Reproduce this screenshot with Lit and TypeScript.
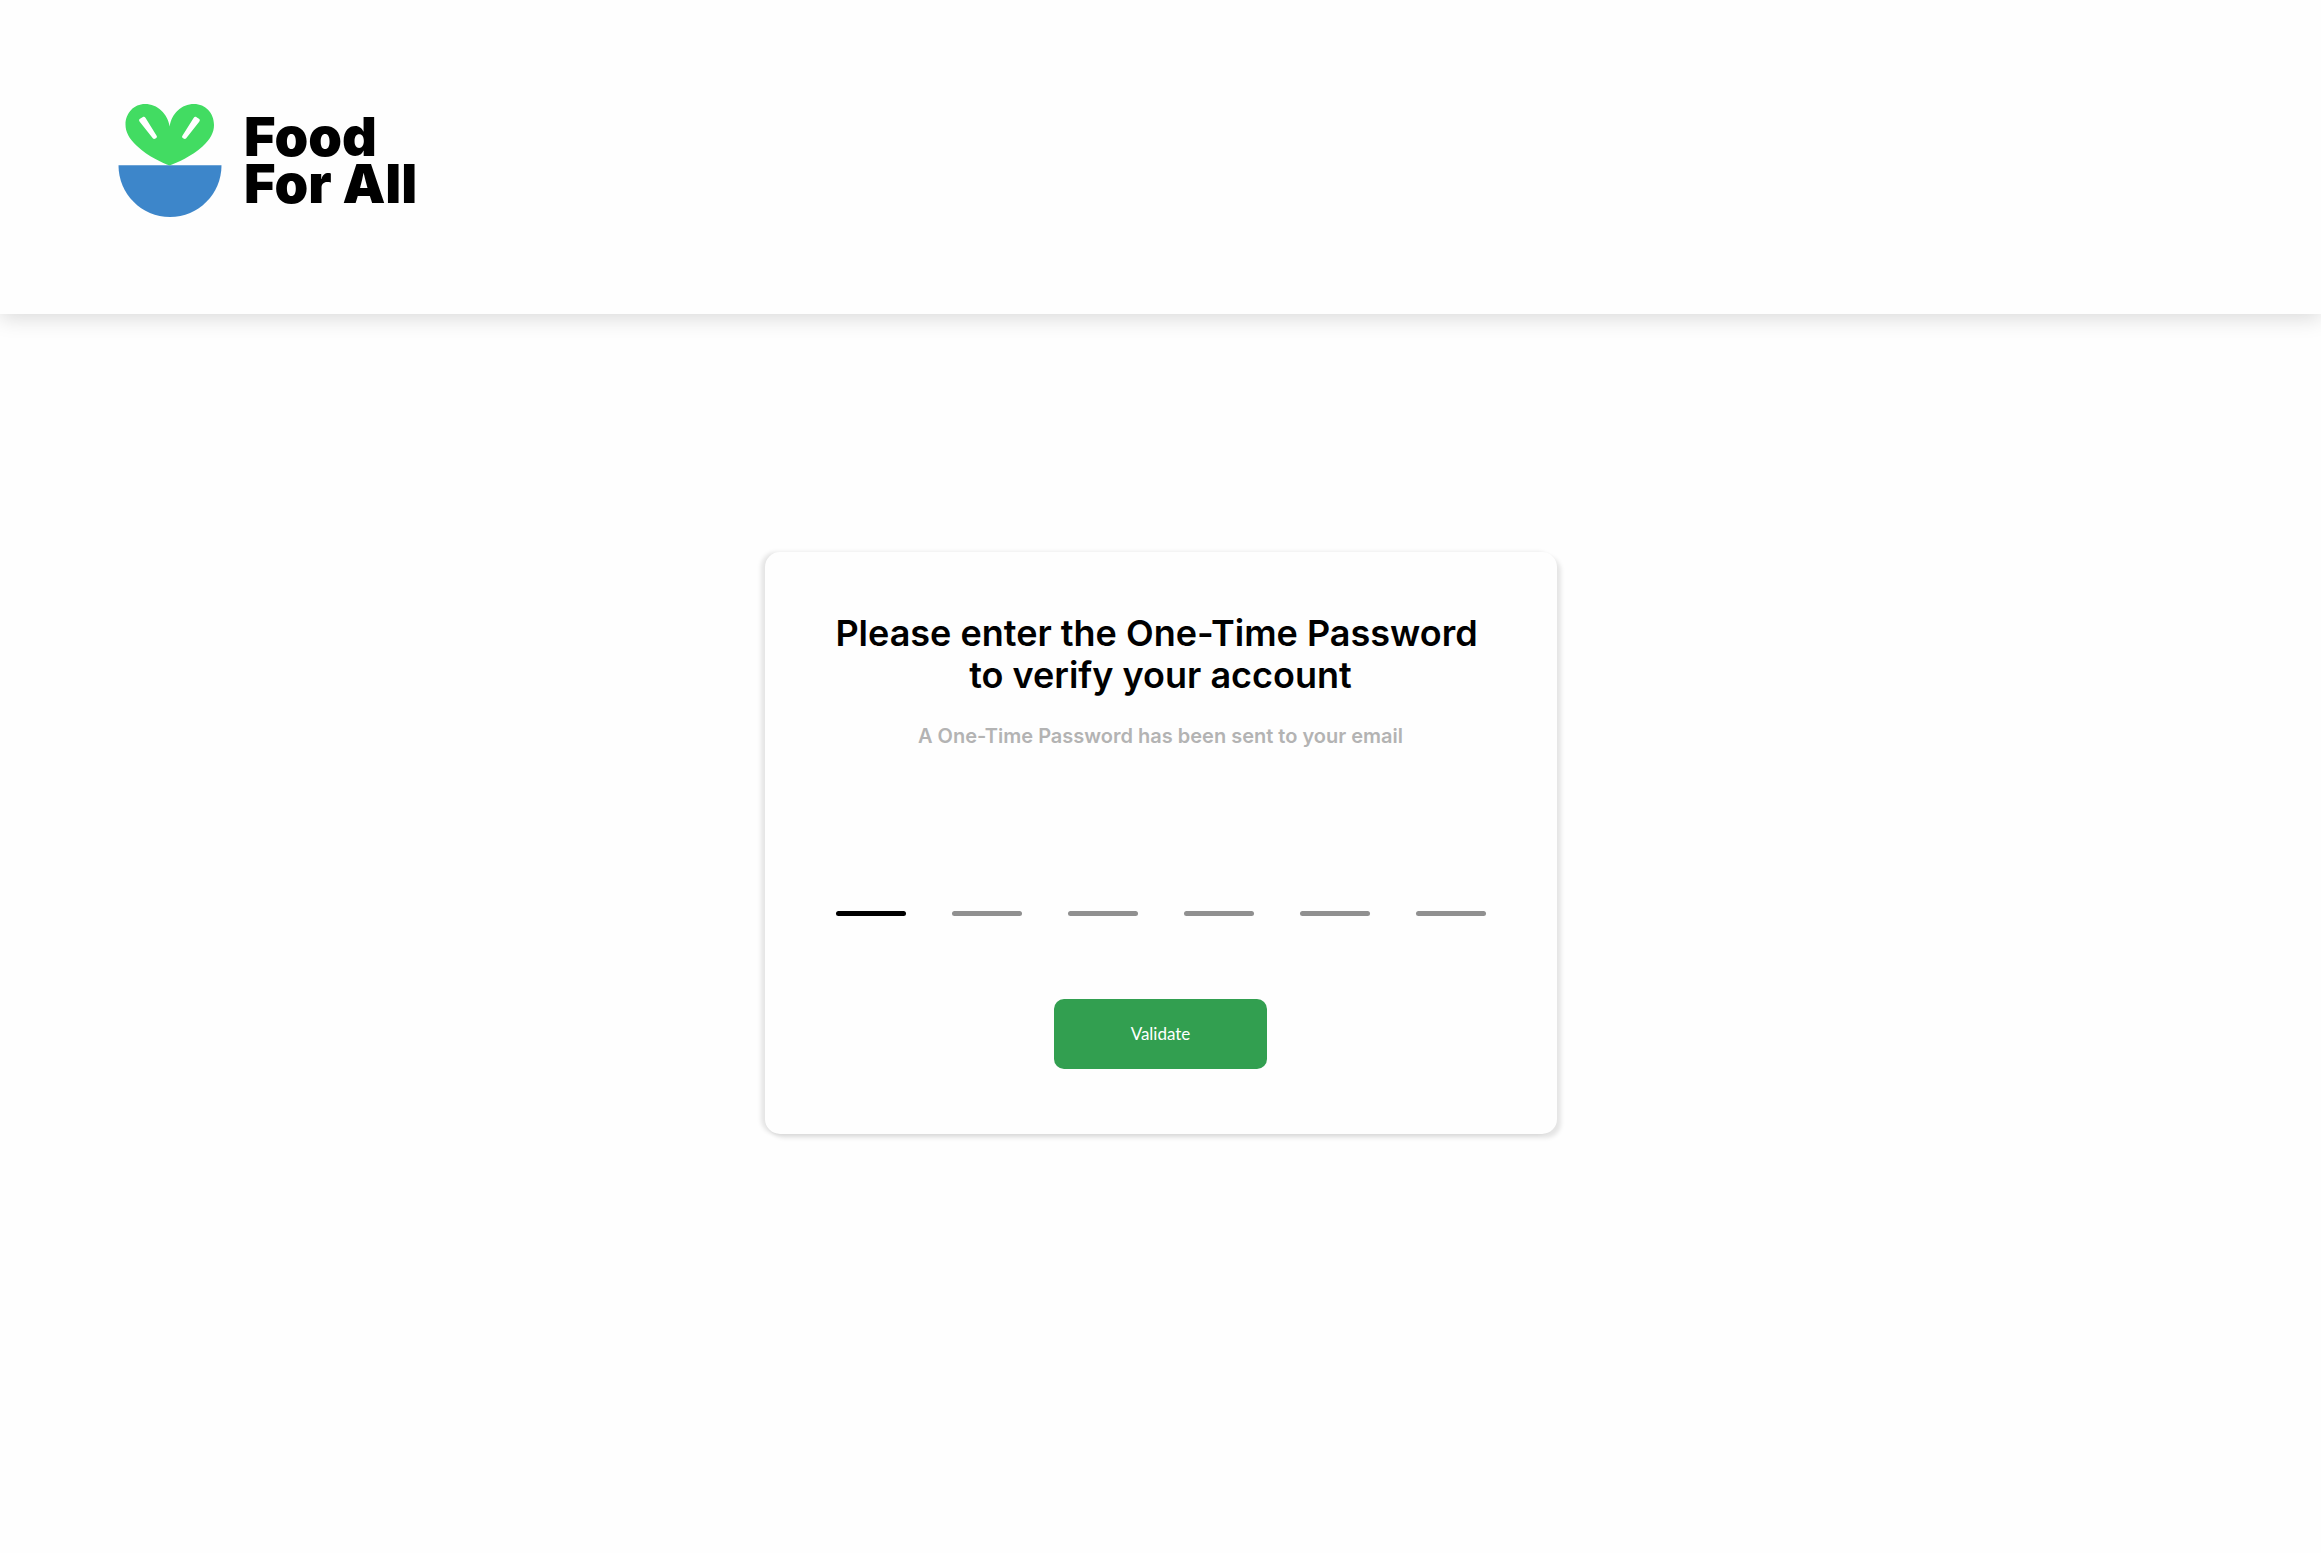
import { LitElement, css, html } from "lit";
import { customElement, state } from "lit/decorators.js";
import { classMap } from "lit/directives/class-map.js";

const CODE_LENGTH = 6;

@customElement("brand-logo")
class BrandLogo extends LitElement {
  static styles = css`
    :host {
      display: flex;
    }
    .logo {
      display: flex;
      align-items: flex-start;
      gap: 22px;
      color: #000;
      text-decoration: none;
    }
    .mark {
      display: block;
      width: 104px;
      height: 116px;
    }
    .name {
      padding-top: 10px;
      font: 900 54px/47px Inter, sans-serif;
    }
    .line {
      display: block;
    }
  `;

  render() {
    return html`
      <a class="logo" href="/">
        <svg class="mark" viewBox="0 0 104 116" aria-hidden="true">
          <path
            fill="#3d86ca"
            d="M0.5 62.3H103.5C103.5 91 80.5 114 52 114C23.500 114 0.500 91 0.500 62.300Z"
          />
          <path
            fill="#42dc62"
            d="M51.700 62.500C45 60 30 53.500 19 43C11 35.500 7.500 29 7.500 21.500C7.500 10 16 1 27 1C39.500 1 49.500 10.500 51.700 23.500C53.500 10.500 63.500 1 76 1C87.500 1 96 10 96 22C96 29.500 92.500 36 84.500 43.500C74 53 58.500 60 51.700 62.500Z"
          />
          <path
            fill="#fff"
            d="M21.700 18.700C20.700 17.300 21 16.500 22 15.800L24.500 14.200C25.800 13.400 26.800 13.800 27.600 15L38.600 32.700C39.200 33.700 39 34.400 38.200 35L37.500 35.500C36.500 36.200 35.500 36.100 34.800 35.200Z"
          />
          <path
            fill="#fff"
            d="M81.200 18.700C82.200 17.300 81.900 16.500 80.900 15.800L78.600 14.200C77.400 13.400 76.400 13.800 75.600 15L64.400 32.700C63.800 33.700 64 34.400 64.800 35L65.500 35.500C66.500 36.200 67.500 36.100 68.200 35.200Z"
          />
        </svg>
        <span class="name">
          <span class="line">Food</span>
          <span class="line">For All</span>
        </span>
      </a>
    `;
  }
}

@customElement("otp-form")
class OtpForm extends LitElement {
  @state() private digits: string[] = Array(CODE_LENGTH).fill("");
  @state() private active = 0;

  static styles = css`
    :host {
      display: block;
      width: 100%;
      max-width: 792px;
    }
    .card {
      box-sizing: border-box;
      display: flex;
      flex-direction: column;
      align-items: center;
      padding: 60px 48px 65px;
      border-radius: 15px;
      background: #fefefe;
      box-shadow:
        4px 4px 4px rgba(0, 0, 0, 0.1),
        -4px 0 4px rgba(0, 0, 0, 0.1);
      text-align: center;
    }
    .title {
      margin: 0;
      color: #000;
      font: 600 36px/42px Inter, sans-serif;
    }
    .first {
      display: block;
      padding-right: 8px;
    }
    .hint {
      margin: 28px 0 0;
      color: #b3b3b3;
      font: 600 20px/24px Inter, sans-serif;
    }
    .code {
      display: flex;
      flex-wrap: wrap;
      justify-content: center;
      gap: 46px;
      margin: 0;
      padding: 103px 0 83px;
      border: 0;
    }
    .slot {
      display: block;
      width: 70px;
    }
    .digit {
      display: block;
      box-sizing: border-box;
      width: 100%;
      height: 60px;
      padding: 0;
      border: 0;
      outline: none;
      background: transparent;
      color: #000;
      font: 600 36px/42px Inter, sans-serif;
      text-align: center;
    }
    .slot::after {
      content: "";
      display: block;
      height: 5px;
      border-radius: 3px;
      background: #909090;
    }
    .slot.active::after {
      background: #000;
    }
    .submit {
      width: 213px;
      height: 70px;
      padding: 0;
      border: 0;
      border-radius: 10px;
      background: #329f50;
      color: #fff;
      font: 400 17px/24px Lato, sans-serif;
      cursor: pointer;
    }
  `;

  private onInput(index: number, event: Event) {
    const input = event.target as HTMLInputElement;
    this.digits = this.digits.map((d, i) => (i === index ? input.value : d));
    if (input.value && index < CODE_LENGTH - 1) {
      this.renderRoot.querySelectorAll<HTMLInputElement>(".digit")[index + 1].focus();
    }
  }

  render() {
    return html`
      <form class="card" @submit=${(e: Event) => e.preventDefault()}>
        <h1 class="title">
          <span class="first">Please enter the One-Time Password</span>
          to verify your account
        </h1>
        <p class="hint">A One-Time Password has been sent to your email</p>
        <fieldset class="code" aria-label="One-Time Password">
          ${this.digits.map(
            (digit, i) => html`
              <label class=${classMap({ slot: true, active: i === this.active })}>
                <input
                  class="digit"
                  type="text"
                  inputmode="numeric"
                  maxlength="1"
                  aria-label="Digit ${i + 1}"
                  .value=${digit}
                  @focus=${() => (this.active = i)}
                  @input=${(e: Event) => this.onInput(i, e)}
                />
              </label>
            `
          )}
        </fieldset>
        <button class="submit" type="submit">Validate</button>
      </form>
    `;
  }
}

@customElement("app-root")
class AppRoot extends LitElement {
  static styles = css`
    :host {
      display: block;
      min-height: 100vh;
      background: #fefefe;
    }
    .header {
      padding: 103px 118px 95px;
      background: #fefefe;
      box-shadow: 0 4px 20px rgba(0, 0, 0, 0.15);
    }
    .main {
      display: flex;
      justify-content: center;
      padding: 238px 24px 48px;
    }
  `;

  render() {
    return html`
      <header class="header"><brand-logo></brand-logo></header>
      <main class="main"><otp-form></otp-form></main>
    `;
  }
}
